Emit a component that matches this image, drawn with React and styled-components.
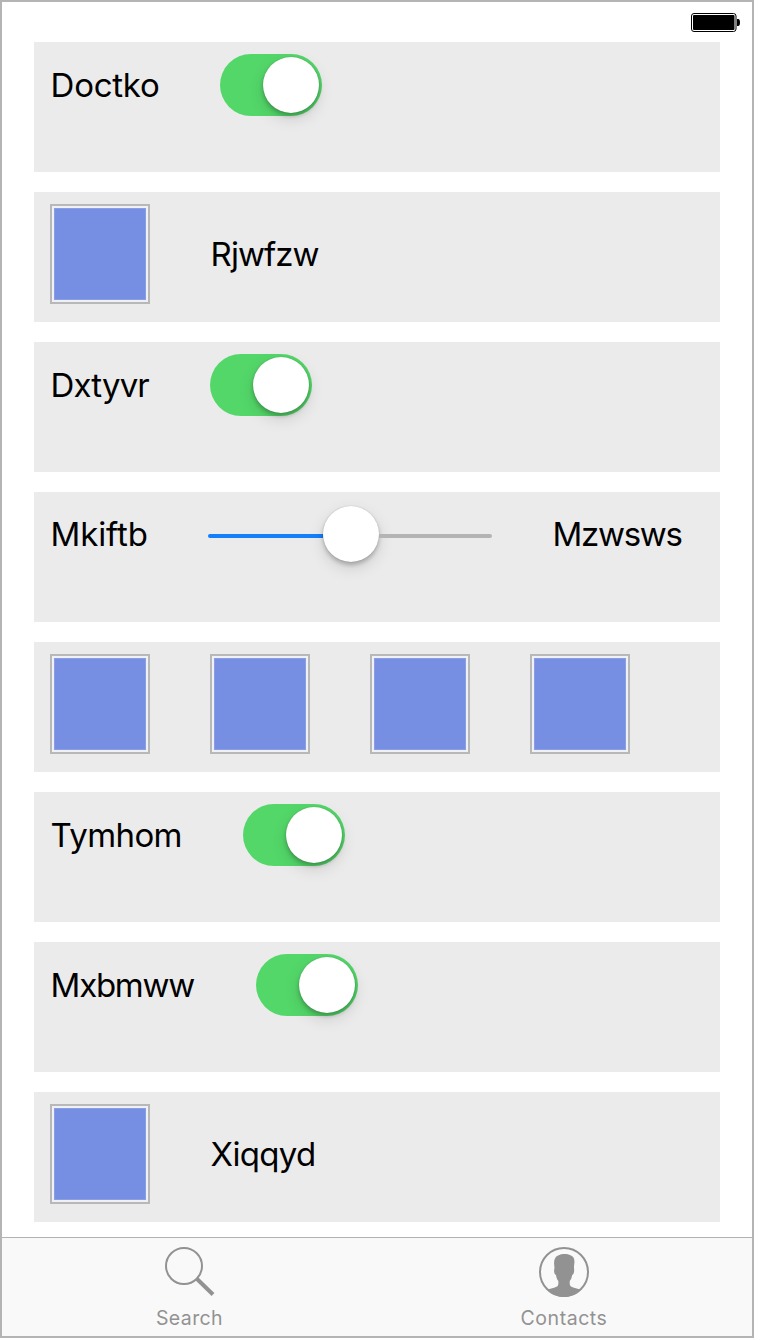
import React from "react";
import styled, { createGlobalStyle } from "styled-components";

const GlobalStyle = createGlobalStyle`
  * { box-sizing: border-box; }
  body { margin: 0; background: #fff; font-family: Inter, "Liberation Sans", sans-serif; }
`;

const Screen = styled.div`
  width: 754px;
  height: 1338px;
  border: 2px solid #b4b4b4;
  background: #fff;
  display: flex;
  flex-direction: column;
`;

const StatusBar = styled.header`
  height: 40px;
  display: flex;
  justify-content: flex-end;
  padding: 11px 11px 0 0;
`;

const List = styled.main`
  flex: 1;
  display: flex;
  flex-direction: column;
  gap: 20px;
  padding: 0 32px;
`;

const Row = styled.section`
  height: 130px;
  padding: 12px 16px;
  background: #ebebeb;
  display: flex;
  align-items: flex-start;
  gap: 60px;
`;

const Label = styled.span`
  width: ${(p) => p.$width}px;
  height: ${(p) => p.$height || 62}px;
  line-height: ${(p) => p.$height || 62}px;
  padding-left: 0.6px;
  font-size: 33px;
  letter-spacing: ${(p) => p.$spacing || 0}px;
  color: #000;
  white-space: nowrap;
  flex: none;
`;

const SwitchTrack = styled.div`
  width: 102px;
  height: 62px;
  padding: 3px;
  border-radius: 31px;
  background: #53d769;
  display: flex;
  justify-content: flex-end;
`;

const Thumb = styled.div`
  width: 56px;
  height: 56px;
  border-radius: 50%;
  background: #fff;
  flex: none;
  box-shadow: 0 6px 16px rgba(0, 0, 0, 0.13), 0 3px 4px rgba(0, 0, 0, 0.22), 0 0 1px rgba(0, 0, 0, 0.25);
`;

const SliderBox = styled.div`
  width: 284px;
  height: 60px;
  display: flex;
  align-items: center;
`;

const Rail = styled.div`
  width: ${(p) => p.$width}px;
  height: 4px;
  margin-top: 4px;
  background: ${(p) => (p.$active ? "#157efb" : "#b4b4b4")};
  border-radius: ${(p) => (p.$active ? "2px 0 0 2px" : "0 2px 2px 0")};
`;

const Swatch = styled.div`
  width: 100px;
  height: 100px;
  border: 2px solid #b8b8b8;
  padding: 2px;
  background: #eff1f6;
  flex: none;
`;

const SwatchColor = styled.div`
  height: 100%;
  background: #768fe2;
  border: 1px solid #8a9ee5;
`;

const TabBar = styled.nav`
  height: 99px;
  border-top: 1px solid #b2b2b2;
  background: #f9f9f9;
  display: flex;
`;

const Tab = styled.div`
  width: 50%;
  display: flex;
  flex-direction: column;
  align-items: center;
  padding-top: 9px;
  padding-right: ${(p) => p.$inset || 0}px;
  color: #929292;
`;

const TabLabel = styled.span`
  font-size: 19.5px;
  line-height: 24px;
  margin-top: 9px;
  letter-spacing: ${(p) => p.$spacing}px;
`;

const Battery = () => (
  <svg width="50" height="20" viewBox="0 0 50 20">
    <rect x="0.5" y="0.5" width="44.500" height="18" rx="2.5" fill="#fff" stroke="#000" />
    <rect x="2" y="2" width="41.500" height="15" rx="1" />
    <path d="M46 6h1.2c1.2 0 1.8 1.5 1.8 3.5s-.6 3.5-1.8 3.5H46z" />
  </svg>
);

const SearchIcon = () => (
  <svg width="50" height="50" viewBox="0 0 50 50" fill="none" stroke="currentColor">
    <circle cx="19" cy="19" r="18" strokeWidth="2" />
    <path d="M31.800 31.800 48 47.500" strokeWidth="4" />
  </svg>
);

const ContactIcon = () => (
  <svg width="50" height="50" viewBox="0 0 50 50">
    <circle cx="25" cy="25" r="24" fill="none" stroke="currentColor" strokeWidth="2" />
    <path
      fill="currentColor"
      d="M8 42.7c3-.8 7.500-1.800 10-3.200 1.600-1 1.500-4 1.300-5.500-1.300-1.700-2-3.700-2.300-6-1.600-.5-2.300-4-1.700-6 .3-.8 0-3-.2-5C14.800 10.500 18 8.500 20.500 8c2-1.300 8-1.300 11 .2 3.500 1.300 4.500 4.300 3.700 9.300-.2 1.500-.3 3-.1 4.500.3 3-.6 5.500-1.900 6-.4 2.500-1.200 4.500-2.400 6-.2 2-.2 4.500 1.200 5.500 2.500 1.400 7 2.400 10 3.200C38 47 32 50 25 50S12 47 8 42.700z"
    />
  </svg>
);

const Switch = () => (
  <SwitchTrack><Thumb /></SwitchTrack>
);

const ColorSwatch = () => (
  <Swatch><SwatchColor /></Swatch>
);

export default function App() {
  return (
    <Screen>
      <GlobalStyle />
      <StatusBar><Battery /></StatusBar>
      <List>
        <Row><Label $width={110} $spacing={-0.25}>Doctko</Label><Switch /></Row>
        <Row><ColorSwatch /><Label $width={110} $height={100} $spacing={-0.95}>Rjwfzw</Label></Row>
        <Row><Label $width={100} $spacing={-0.85}>Dxtyvr</Label><Switch /></Row>
        <Row>
          <Label $width={98} $height={60} $spacing={-0.15}>Mkiftb</Label>
          <SliderBox>
            <Rail $active $width={115} /><Thumb /><Rail $width={113} />
          </SliderBox>
          <Label $width={130} $height={60} $spacing={-1.3}>Mzwsws</Label>
        </Row>
        <Row><ColorSwatch /><ColorSwatch /><ColorSwatch /><ColorSwatch /></Row>
        <Row><Label $width={133} $spacing={-0.6}>Tymhom</Label><Switch /></Row>
        <Row><Label $width={146} $spacing={-1.25}>Mxbmww</Label><Switch /></Row>
        <Row><ColorSwatch /><Label $width={110} $height={100} $spacing={-0.7}>Xiqqyd</Label></Row>
      </List>
      <TabBar>
        <Tab><SearchIcon /><TabLabel $spacing={0.4}>Search</TabLabel></Tab>
        <Tab $inset={1}><ContactIcon /><TabLabel $spacing={0.55}>Contacts</TabLabel></Tab>
      </TabBar>
    </Screen>
  );
}
